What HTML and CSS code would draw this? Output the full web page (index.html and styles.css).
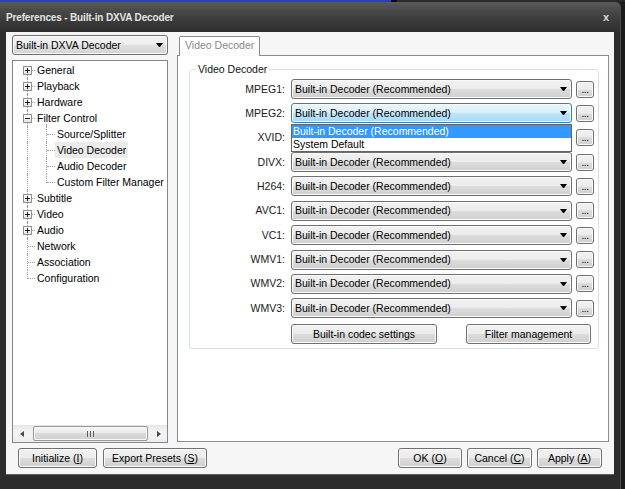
FILE: index.html
```html
<!DOCTYPE html>
<html>
<head>
<meta charset="utf-8">
<title>Preferences</title>
<link rel="stylesheet" href="styles.css">
</head>
<body>
<div class="topstrip"></div>
<div class="window">
  <div class="titlebar">
    <span class="title">Preferences - Built-in DXVA Decoder</span>
    <span class="close">x</span>
  </div>
  <div class="client">
    <div class="main">
      <div class="left">
        <div class="combo"><span>Built-in DXVA Decoder</span><i class="arrow"></i></div>
        <div class="tree">
          <div class="nodes">
            <div class="node l1 first"><i class="box plus"></i><i class="conn"></i><span class="lab">General</span></div>
            <div class="node l1"><i class="box plus"></i><i class="conn"></i><span class="lab">Playback</span></div>
            <div class="node l1"><i class="box plus"></i><i class="conn"></i><span class="lab">Hardware</span></div>
            <div class="node l1 open"><i class="box minus"></i><i class="conn"></i><span class="lab">Filter Control</span></div>
            <div class="node l2"><i class="conn"></i><span class="lab">Source/Splitter</span></div>
            <div class="node l2 sel"><i class="conn"></i><span class="lab">Video Decoder</span></div>
            <div class="node l2"><i class="conn"></i><span class="lab">Audio Decoder</span></div>
            <div class="node l2 lastchild"><i class="conn"></i><span class="lab">Custom Filter Manager</span></div>
            <div class="node l1"><i class="box plus"></i><i class="conn"></i><span class="lab">Subtitle</span></div>
            <div class="node l1"><i class="box plus"></i><i class="conn"></i><span class="lab">Video</span></div>
            <div class="node l1"><i class="box plus"></i><i class="conn"></i><span class="lab">Audio</span></div>
            <div class="node l1"><i class="conn"></i><span class="lab">Network</span></div>
            <div class="node l1"><i class="conn"></i><span class="lab">Association</span></div>
            <div class="node l1 last"><i class="conn"></i><span class="lab">Configuration</span></div>
          </div>
          <div class="hscroll">
            <span class="sbtn"><i class="tri-l"></i></span>
            <span class="strack"><span class="thumb"><i class="grip"></i></span></span>
            <span class="sbtn"><i class="tri-r"></i></span>
          </div>
        </div>
      </div>
      <div class="right">
        <div class="tabs"><div class="tab">Video Decoder</div></div>
        <div class="panel">
          <fieldset class="group">
            <legend>Video Decoder</legend>
            <div class="rows">
              <div class="row"><span class="lbl">MPEG1:</span><div class="dd"><span>Built-in Decoder (Recommended)</span><i class="arrow"></i></div><span class="dots">...</span></div>
              <div class="row"><span class="lbl">MPEG2:</span><div class="dd active"><span>Built-in Decoder (Recommended)</span><i class="arrow"></i>
                <div class="list"><div class="item hi">Built-in Decoder (Recommended)</div><div class="item">System Default</div></div>
              </div><span class="dots">...</span></div>
              <div class="row"><span class="lbl">XVID:</span><div class="dd"><span>Built-in Decoder (Recommended)</span><i class="arrow"></i></div><span class="dots">...</span></div>
              <div class="row"><span class="lbl">DIVX:</span><div class="dd"><span>Built-in Decoder (Recommended)</span><i class="arrow"></i></div><span class="dots">...</span></div>
              <div class="row"><span class="lbl">H264:</span><div class="dd"><span>Built-in Decoder (Recommended)</span><i class="arrow"></i></div><span class="dots">...</span></div>
              <div class="row"><span class="lbl">AVC1:</span><div class="dd"><span>Built-in Decoder (Recommended)</span><i class="arrow"></i></div><span class="dots">...</span></div>
              <div class="row"><span class="lbl">VC1:</span><div class="dd"><span>Built-in Decoder (Recommended)</span><i class="arrow"></i></div><span class="dots">...</span></div>
              <div class="row"><span class="lbl">WMV1:</span><div class="dd"><span>Built-in Decoder (Recommended)</span><i class="arrow"></i></div><span class="dots">...</span></div>
              <div class="row"><span class="lbl">WMV2:</span><div class="dd"><span>Built-in Decoder (Recommended)</span><i class="arrow"></i></div><span class="dots">...</span></div>
              <div class="row"><span class="lbl">WMV3:</span><div class="dd"><span>Built-in Decoder (Recommended)</span><i class="arrow"></i></div><span class="dots">...</span></div>
            </div>
            <div class="gbtns">
              <span class="btn b1">Built-in codec settings</span>
              <span class="btn b2">Filter management</span>
            </div>
          </fieldset>
        </div>
      </div>
    </div>
    <div class="bottom">
      <span class="btn w-init">Initialize (<u>I</u>)</span>
      <span class="btn w-exp">Export Presets (<u>S</u>)</span>
      <span class="spacer"></span>
      <span class="btn w-ok">OK (<u>O</u>)</span>
      <span class="btn w-cancel">Cancel (<u>C</u>)</span>
      <span class="btn w-apply">Apply (<u>A</u>)</span>
    </div>
  </div>
</div>
</body>
</html>
```

FILE: styles.css
```css
* { box-sizing: border-box; }
html, body { margin: 0; padding: 0; }
body {
  width: 625px;
  height: 489px;
  overflow: hidden;
  background: #1b1b1b;
  font-family: "Liberation Sans", Arial, sans-serif;
  font-size: 10.5px;
  line-height: 13px;
  color: #000;
}
i { display: block; font-style: normal; }

.topstrip {
  height: 2px;
  background: linear-gradient(to right, #2c3fb3 0, #2c3fb3 391px, #0e0e0e 391px, #0e0e0e 397px, #2a2a2a 397px);
}

.window {
  width: 621px;
  height: 487px;
  background: #2c2c2c;
  border-right: 1px solid #4d4d4d;
  border-radius: 0 5px 0 0;
  display: flex;
  flex-direction: column;
}

.titlebar {
  height: 30px;
  flex: none;
  display: flex;
  align-items: center;
  justify-content: space-between;
  padding: 0 11px 0 6px;
  background: linear-gradient(#5a5a5a 0%, #464646 35%, #383838 70%, #2f2f2f 100%);
  border-radius: 0 5px 0 0;
}
.title {
  color: #e4e4e4;
  font-weight: bold;
  font-size: 10px;
  letter-spacing: -0.15px;
}
.close {
  color: #dcdcdc;
  font-weight: bold;
  font-size: 11px;
}

.client {
  margin: 0 6px;
  height: 443px;
  flex: none;
  background: #f6f6f6;
  padding: 3px 0 0 6px;
  border-bottom: 1px solid #5c5c5c;
  display: flex;
  flex-direction: column;
}

.main {
  height: 408px;
  display: flex;
  gap: 9px;
}

/* left column */
.left {
  width: 156px;
  display: flex;
  flex-direction: column;
  gap: 5px;
}
.combo {
  height: 20px;
  border: 1px solid #707070;
  border-radius: 3px;
  background: linear-gradient(#f4f4f4 0%, #ececec 50%, #e0e0e0 50%, #d4d4d4 100%);
  box-shadow: inset 0 0 0 1px #fbfbfb;
  display: flex;
  align-items: center;
  justify-content: space-between;
  padding: 0 4px 0 3px;
}
.arrow {
  width: 1px;
  height: 0;
  border-left: 3px solid transparent;
  border-right: 3px solid transparent;
  border-top: 4px solid #000;
  box-sizing: content-box;
}

.tree {
  flex: 1;
  border: 1px solid #828790;
  background: #fff;
  display: flex;
  flex-direction: column;
}
.nodes {
  flex: 1;
  padding-top: 1px;
}
.node {
  position: relative;
  height: 16px;
  display: flex;
  align-items: center;
}
.node::before {
  content: "";
  position: absolute;
  left: 14px;
  top: 0;
  bottom: 0;
  border-left: 1px dotted #a0a0a0;
}
.node.first::before { top: 8px; }
.node.last::before { bottom: 7px; }
.conn {
  position: absolute;
  top: 8px;
  left: 15px;
  width: 7px;
  border-top: 1px dotted #a0a0a0;
}
.l2 .conn { left: 34px; width: 8px; }
.l2::after {
  content: "";
  position: absolute;
  left: 33px;
  top: 0;
  bottom: 0;
  border-left: 1px dotted #a0a0a0;
}
.l2.lastchild::after { bottom: 7px; }
.open::after {
  content: "";
  position: absolute;
  left: 33px;
  top: 14px;
  bottom: 0;
  border-left: 1px dotted #a0a0a0;
}
.box {
  position: absolute;
  left: 10px;
  top: 4px;
  width: 9px;
  height: 9px;
  border: 1px solid #919191;
  background: linear-gradient(#ffffff, #e4e4e4);
  z-index: 1;
}
.box::before {
  content: "";
  position: absolute;
  left: 1px;
  top: 3px;
  width: 5px;
  height: 1px;
  background: #1c1c1c;
}
.box.plus::after {
  content: "";
  position: absolute;
  left: 3px;
  top: 1px;
  width: 1px;
  height: 5px;
  background: #1c1c1c;
}
.lab {
  margin-left: 22px;
  padding: 0 2px;
  height: 16px;
  line-height: 16px;
  white-space: nowrap;
}
.l2 .lab { margin-left: 42px; }
.sel .lab { background: #ebebeb; }

.hscroll {
  height: 17px;
  display: flex;
  background: linear-gradient(#e6e6e6, #f2f2f2 30%, #f2f2f2 70%, #ebebeb);
}
.sbtn {
  width: 17px;
  display: flex;
  align-items: center;
  justify-content: center;
}
.tri-l {
  border-top: 3.5px solid transparent;
  border-bottom: 3.5px solid transparent;
  border-right: 4px solid #4a4a4a;
}
.tri-r {
  border-top: 3.5px solid transparent;
  border-bottom: 3.5px solid transparent;
  border-left: 4px solid #4a4a4a;
}
.strack {
  flex: 1;
  display: flex;
  align-items: center;
  padding: 0 2px 0 3px;
}
.thumb {
  flex: 1;
  height: 15px;
  border: 1px solid #989898;
  border-radius: 2px;
  background: linear-gradient(#f6f6f6 0%, #eaeaea 50%, #dadada 50%, #d0d0d0 100%);
  box-shadow: inset 0 0 0 1px #f9f9f9;
  display: flex;
  align-items: center;
  justify-content: center;
}
.grip {
  width: 7px;
  height: 6px;
  background: repeating-linear-gradient(to right, #5a5a5a 0 1px, transparent 1px 3px);
}

/* right column */
.right {
  width: 432px;
  display: flex;
  flex-direction: column;
}
.tabs {
  height: 19px;
  margin-top: 1px;
  padding-left: 2px;
  display: flex;
  position: relative;
  z-index: 2;
}
.tab {
  width: 81px;
  height: 20px;
  border: 1px solid #898c95;
  border-bottom: none;
  border-radius: 2px 2px 0 0;
  background: linear-gradient(#ffffff, #fbfbfb);
  color: #8a8a8a;
  padding-left: 5px;
  line-height: 17px;
}
.panel {
  height: 387px;
  border: 1px solid #898c95;
  background: #fff;
  padding: 6px 9px 0 11px;
}
.group {
  margin: 0;
  padding: 0 0 4px 0;
  border: 1px solid #d5dfe5;
  border-radius: 3px;
}
.group legend {
  margin-left: 6px;
  padding: 0 2px;
  line-height: 14px;
  color: #111;
}
.rows {
  padding-top: 3px;
  display: flex;
  flex-direction: column;
  gap: 4.37px;
}
.row {
  height: 20px;
  display: flex;
  align-items: center;
}
.lbl {
  width: 95px;
  margin-right: 6px;
  text-align: right;
  color: #1a1a1a;
}
.dd {
  position: relative;
  width: 281px;
  height: 20px;
  border: 1px solid #707070;
  border-radius: 3px;
  background: linear-gradient(#f2f2f2 0%, #ebebeb 50%, #dddddd 50%, #cfcfcf 100%);
  box-shadow: inset 0 0 0 1px #fafafa;
  display: flex;
  align-items: center;
  justify-content: space-between;
  padding: 0 4px 0 3px;
  white-space: nowrap;
}
.dd.active {
  border-color: #3c7fb1;
  background: linear-gradient(#eaf6fd 0%, #d9f0fc 50%, #bee6fd 50%, #a7d9f5 100%);
  box-shadow: inset 0 0 0 1px #f4fbfe;
}
.list {
  position: absolute;
  top: 20px;
  left: -1px;
  width: 281px;
  height: 28px;
  border: 1px solid #646464;
  background: #fff;
  z-index: 5;
}
.item {
  height: 13px;
  line-height: 13px;
  padding-left: 1px;
  white-space: nowrap;
}
.item.hi {
  background: #3399ff;
  color: #fff;
}
.dots {
  width: 18px;
  height: 17px;
  margin-left: 4px;
  border: 1px solid #707070;
  border-radius: 3px;
  background: linear-gradient(#f2f2f2 0%, #ebebeb 50%, #dddddd 50%, #cfcfcf 100%);
  box-shadow: inset 0 0 0 1px #fafafa;
  text-align: center;
  line-height: 16px;
  font-size: 10px;
  letter-spacing: -0.5px;
}

.btn {
  display: flex;
  align-items: center;
  justify-content: center;
  height: 20px;
  border: 1px solid #707070;
  border-radius: 3px;
  background: linear-gradient(#f2f2f2 0%, #ebebeb 50%, #dddddd 50%, #cfcfcf 100%);
  box-shadow: inset 0 0 0 1px #fbfbfb;
  white-space: nowrap;
  color: #000;
}
.gbtns {
  display: flex;
  margin-top: 6px;
  padding-left: 101px;
  gap: 29px;
}
.b1 { width: 146px; }
.b2 { width: 125px; }

.bottom {
  margin: 5px 12px 0 6px;
  display: flex;
  gap: 5px;
}
.spacer { flex: 1; }
.w-init { width: 79px; margin-right: 1px; }
.w-exp { width: 104px; }
.w-ok { width: 64px; }
.w-cancel { width: 65px; }
.w-apply { width: 65px; }
```
